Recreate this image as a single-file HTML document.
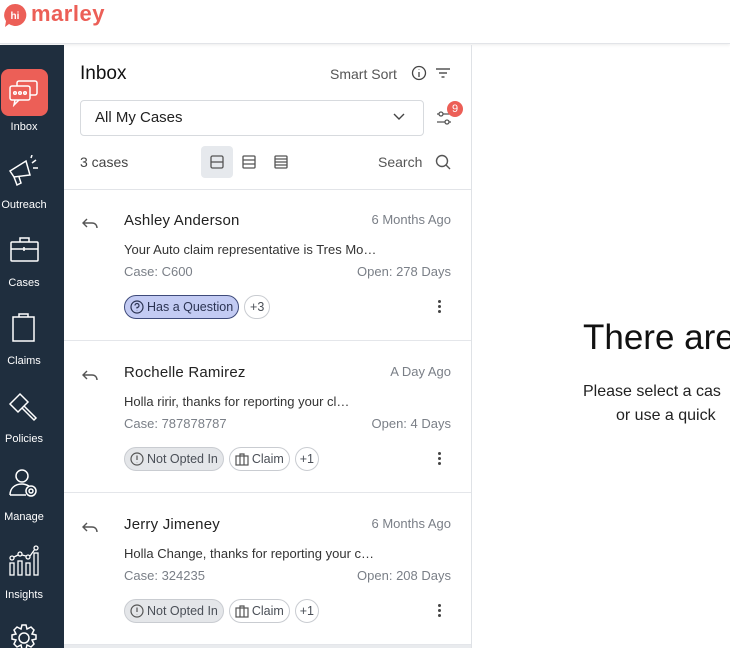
<!DOCTYPE html>
<html><head><meta charset="utf-8"><style>
*{box-sizing:border-box;margin:0;padding:0}
body{width:730px;height:648px;overflow:hidden;background:#fff;font-family:"Liberation Sans",sans-serif;color:#1d1d1f;position:relative}
.hdr{position:absolute;left:0;top:0;width:730px;height:44px;border-bottom:1px solid #e2e4e8;box-shadow:0 1px 3px rgba(0,0,0,.08)}
.side{position:absolute;left:0;top:45px;width:64px;height:603px;background:#1f2e3e}
.nav{position:absolute;left:0;width:64px;text-align:center;color:#fff;font-size:11px}
.list{position:absolute;left:64px;top:45px;width:408px;height:603px;border-right:1px solid #dfe2e6}
.abs{position:absolute}
.card{position:absolute;left:0;width:407px;height:151px;border-bottom:1px solid #e4e6ea}
.name{position:absolute;left:60px;top:22px;font-size:15px;color:#222;letter-spacing:.2px}
.ago{position:absolute;right:20px;top:22px;font-size:13px;color:#7a7f87}
.msg{position:absolute;left:60px;top:52px;font-size:13px;color:#333}
.cs{position:absolute;left:60px;top:74px;font-size:13px;color:#7a7f87}
.op{position:absolute;right:20px;top:74px;font-size:13px;color:#7a7f87}
.tags{position:absolute;left:60px;top:105px;display:flex;gap:5px}
.tag{height:24px;border:1px solid #c9ccd1;border-radius:12px;font-size:12.5px;color:#4a4f57;padding:0 5px;display:flex;align-items:center;gap:3px}
.dots{position:absolute;right:30px;top:110px;width:3px}
.dots i{display:block;width:3px;height:3px;background:#444;border-radius:50%;margin-bottom:2px}
</style></head><body>
<div class="hdr">
<svg class="abs" style="left:3px;top:3px" width="24" height="26" viewBox="0 0 24 26"><path d="M12 1a11 11 0 1 1-6 20l-4 3 1-6A11 11 0 0 1 12 1z" fill="#ec5f57"/><text x="12" y="16" font-size="10" font-weight="bold" fill="#fff" text-anchor="middle" font-family="Liberation Sans">hi</text></svg>
<div class="abs" style="left:31px;top:1px;font-size:22px;line-height:26px;color:#ec5f57;font-weight:bold;letter-spacing:.5px">marley</div>
</div>
<div class="side">
<div class="abs" style="left:1px;top:24px;width:47px;height:47px;background:#ec5f57;border-radius:8px"></div>
<svg class="abs" style="left:8px;top:34px" width="32" height="28" viewBox="0 0 32 28" fill="none" stroke="#fff" stroke-width="1.5"><rect x="9" y="2" width="20" height="14" rx="2"/><rect x="2" y="7" width="20" height="14" rx="2" fill="#ec5f57"/><path d="M7 21l-1 5 5-5"/><circle cx="7" cy="14" r="1.3"/><circle cx="12" cy="14" r="1.3"/><circle cx="17" cy="14" r="1.3"/></svg>
<div class="nav" style="top:76px;left:-8px">Inbox</div>
<svg class="abs" style="left:6px;top:110px" width="36" height="34" viewBox="0 0 36 34" fill="none" stroke="#fff" stroke-width="1.5"><path d="M4 16l16-10 4 14-16 2z"/><path d="M8 22l3 8 4-2-2-6"/><path d="M26 8l4-3M27 13h5M25 3l1-3"/></svg>
<div class="nav" style="top:154px;left:-8px">Outreach</div>
<svg class="abs" style="left:10px;top:190px" width="30" height="28" viewBox="0 0 30 28" fill="none" stroke="#fff" stroke-width="1.5"><rect x="1" y="7" width="27" height="19" rx="1"/><path d="M10 7V3h9v4M1 14h27M14 12v4"/></svg>
<div class="nav" style="top:232px;left:-8px">Cases</div>
<svg class="abs" style="left:12px;top:267px" width="24" height="30" viewBox="0 0 24 30" fill="none" stroke="#fff" stroke-width="1.5"><rect x="1" y="5" width="21" height="24"/><path d="M7 5V2h9v3"/></svg>
<div class="nav" style="top:310px;left:-8px">Claims</div>
<svg class="abs" style="left:8px;top:345px" width="32" height="32" viewBox="0 0 32 32" fill="none" stroke="#fff" stroke-width="1.5"><path d="M2 14L12 4l8 8-10 10z"/><path d="M16 16l12 12-2 2-12-12"/></svg>
<div class="nav" style="top:388px;left:-8px">Policies</div>
<svg class="abs" style="left:8px;top:422px" width="32" height="32" viewBox="0 0 32 32" fill="none" stroke="#fff" stroke-width="1.5"><circle cx="14" cy="9" r="6"/><path d="M2 28c0-7 5-11 12-11 3 0 5 1 7 2M2 28h16"/><circle cx="23" cy="24" r="5"/><circle cx="23" cy="24" r="2"/></svg>
<div class="nav" style="top:466px;left:-8px">Manage</div>
<svg class="abs" style="left:8px;top:500px" width="32" height="32" viewBox="0 0 32 32" fill="none" stroke="#fff" stroke-width="1.3"><rect x="2" y="18" width="4" height="12"/><rect x="10" y="16" width="4" height="14"/><rect x="18" y="18" width="4" height="12"/><rect x="26" y="8" width="4" height="22"/><circle cx="4" cy="13" r="2"/><circle cx="12" cy="9" r="2"/><circle cx="20" cy="12" r="2"/><circle cx="28" cy="3" r="2"/><path d="M6 12l4-2M14 10l4 1M22 11l5-7"/></svg>
<div class="nav" style="top:544px;left:-8px">Insights</div>
<svg class="abs" style="left:9px;top:578px" width="30" height="30" viewBox="0 0 30 30" fill="none" stroke="#fff" stroke-width="1.5"><circle cx="15" cy="15" r="5"/><path d="M13 2h4l1 4 4-2 3 3-2 4 4 1v4l-4 1 2 4-3 3-4-2-1 4h-4l-1-4-4 2-3-3 2-4-4-1v-4l4-1-2-4 3-3 4 2z"/></svg>
</div>
<div class="list">
<div class="abs" style="left:16px;top:18px;font-size:19px;color:#111">Inbox</div>
<div class="abs" style="left:266px;top:21px;font-size:14px;color:#555">Smart Sort</div>
<svg class="abs" style="left:347px;top:20px" width="16" height="16" viewBox="0 0 16 16" fill="none" stroke="#444" stroke-width="1.3"><circle cx="8" cy="8" r="6.5"/><path d="M8 7v5M8 4.5v.5"/></svg>
<svg class="abs" style="left:371px;top:22px" width="16" height="12" viewBox="0 0 16 12" stroke="#555" stroke-width="1.4"><path d="M1 2h14M4 6h8M6.5 10h3"/></svg>
<div class="abs" style="left:16px;top:55px;width:344px;height:36px;border:1px solid #d7dade;border-radius:4px"></div>
<div class="abs" style="left:31px;top:64px;font-size:15px;color:#222">All My Cases</div>
<svg class="abs" style="left:329px;top:68px" width="12" height="8" viewBox="0 0 12 8" fill="none" stroke="#444" stroke-width="1.4"><path d="M1 1l5 5 5-5"/></svg>
<svg class="abs" style="left:372px;top:65px" width="16" height="16" viewBox="0 0 16 16" fill="none" stroke="#555" stroke-width="1.3"><path d="M1 4h14M1 12h14"/><circle cx="5" cy="4" r="2" fill="#fff"/><circle cx="11" cy="12" r="2" fill="#fff"/></svg>
<div class="abs" style="left:383px;top:56px;width:16px;height:16px;border-radius:50%;background:#ec5f57;color:#fff;font-size:11px;text-align:center;line-height:16px">9</div>
<div class="abs" style="left:16px;top:109px;font-size:14px;color:#444">3 cases</div>
<div class="abs" style="left:137px;top:101px;width:32px;height:32px;background:#e6e9ed;border-radius:4px"></div>
<svg class="abs" style="left:146px;top:110px" width="14" height="14" viewBox="0 0 14 14" fill="none" stroke="#555" stroke-width="1.3"><rect x="1" y="1" width="12" height="12" rx="1.5"/><path d="M1 7h12"/></svg>
<svg class="abs" style="left:178px;top:110px" width="14" height="14" viewBox="0 0 14 14" fill="none" stroke="#555" stroke-width="1.3"><rect x="1" y="1" width="12" height="12" rx="1"/><path d="M1 5h12M1 9h12"/></svg>
<svg class="abs" style="left:210px;top:110px" width="14" height="14" viewBox="0 0 14 14" fill="none" stroke="#555" stroke-width="1.3"><rect x="1" y="1" width="12" height="12" rx="1"/><path d="M1 4h12M1 7h12M1 10h12"/></svg>
<div class="abs" style="left:314px;top:109px;font-size:14px;color:#555">Search</div>
<svg class="abs" style="left:371px;top:109px" width="16" height="16" viewBox="0 0 16 16" fill="none" stroke="#555" stroke-width="1.4"><circle cx="7" cy="7" r="5.5"/><path d="M11 11l4 4"/></svg>
<div class="abs" style="left:0;top:144px;width:407px;height:1px;background:#e2e4e8"></div>

<div class="card" style="top:145px">
<svg class="abs" style="left:18px;top:28px" width="16" height="12" viewBox="0 0 16 12" fill="none" stroke="#555" stroke-width="1.4"><path d="M5 1L1 5l4 4M1 5h9c3 0 5 2 5 5"/></svg>
<div class="name">Ashley Anderson</div><div class="ago">6 Months Ago</div>
<div class="msg">Your Auto claim representative is Tres Mo…</div>
<div class="cs">Case: C600</div><div class="op">Open: 278 Days</div>
<div class="tags"><div class="tag" style="background:#c3cbf3;border-color:#3e4a7a;color:#2b3352"><svg width="14" height="14" viewBox="0 0 14 14" fill="none" stroke="#2b3352" stroke-width="1.2"><circle cx="7" cy="7" r="6"/><path d="M5 5.5a2 2 0 1 1 2 2v1M7 10.5v.3"/></svg>Has a Question</div><div class="tag" style="width:26px;padding:0;justify-content:center">+3</div></div>
<div class="dots"><i></i><i></i><i></i></div>
</div>

<div class="card" style="top:297px">
<svg class="abs" style="left:18px;top:28px" width="16" height="12" viewBox="0 0 16 12" fill="none" stroke="#555" stroke-width="1.4"><path d="M5 1L1 5l4 4M1 5h9c3 0 5 2 5 5"/></svg>
<div class="name">Rochelle Ramirez</div><div class="ago">A Day Ago</div>
<div class="msg">Holla ririr, thanks for reporting your cl…</div>
<div class="cs">Case: 787878787</div><div class="op">Open: 4 Days</div>
<div class="tags"><div class="tag" style="background:#e4e6e9"><svg width="14" height="14" viewBox="0 0 14 14" fill="none" stroke="#555" stroke-width="1.2"><circle cx="7" cy="7" r="6"/><path d="M7 3.5v4.5M7 10v.3"/></svg>Not Opted In</div><div class="tag"><svg width="14" height="14" viewBox="0 0 14 14" fill="none" stroke="#555" stroke-width="1.2"><rect x="1" y="4" width="12" height="9"/><path d="M5 4V2h4v2M5 4v9M9 4v9"/></svg>Claim</div><div class="tag" style="width:24px;padding:0;justify-content:center">+1</div></div>
<div class="dots"><i></i><i></i><i></i></div>
</div>

<div class="card" style="top:449px">
<svg class="abs" style="left:18px;top:28px" width="16" height="12" viewBox="0 0 16 12" fill="none" stroke="#555" stroke-width="1.4"><path d="M5 1L1 5l4 4M1 5h9c3 0 5 2 5 5"/></svg>
<div class="name">Jerry Jimeney</div><div class="ago">6 Months Ago</div>
<div class="msg">Holla Change, thanks for reporting your c…</div>
<div class="cs">Case: 324235</div><div class="op">Open: 208 Days</div>
<div class="tags"><div class="tag" style="background:#e4e6e9"><svg width="14" height="14" viewBox="0 0 14 14" fill="none" stroke="#555" stroke-width="1.2"><circle cx="7" cy="7" r="6"/><path d="M7 3.5v4.5M7 10v.3"/></svg>Not Opted In</div><div class="tag"><svg width="14" height="14" viewBox="0 0 14 14" fill="none" stroke="#555" stroke-width="1.2"><rect x="1" y="4" width="12" height="9"/><path d="M5 4V2h4v2M5 4v9M9 4v9"/></svg>Claim</div><div class="tag" style="width:24px;padding:0;justify-content:center">+1</div></div>
<div class="dots"><i></i><i></i><i></i></div>
</div>
<div class="abs" style="left:0;top:600px;width:407px;height:3px;background:#e9ebee"></div>
</div>
<div class="abs" style="left:583px;top:318px;font-size:35px;color:#111;white-space:nowrap">There are</div>
<div class="abs" style="left:583px;top:383px;font-size:16px;color:#222;white-space:nowrap">Please select a cas</div>
<div class="abs" style="left:616px;top:407px;font-size:16px;color:#222;white-space:nowrap">or use a quick</div>
</body></html>
